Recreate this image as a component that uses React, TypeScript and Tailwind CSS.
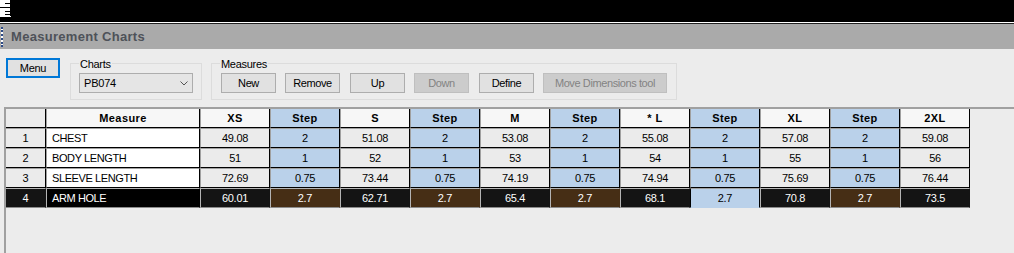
import React from "react";

const cols = ["XS", "Step", "S", "Step", "M", "Step", "* L", "Step", "XL", "Step", "2XL"];

const rows: { n: string; name: string; vals: string[] }[] = [
  { n: "1", name: "CHEST", vals: ["49.08", "2", "51.08", "2", "53.08", "2", "55.08", "2", "57.08", "2", "59.08"] },
  { n: "2", name: "BODY LENGTH", vals: ["51", "1", "52", "1", "53", "1", "54", "1", "55", "1", "56"] },
  { n: "3", name: "SLEEVE LENGTH", vals: ["72.69", "0.75", "73.44", "0.75", "74.19", "0.75", "74.94", "0.75", "75.69", "0.75", "76.44"] },
  { n: "4", name: "ARM HOLE", vals: ["60.01", "2.7", "62.71", "2.7", "65.4", "2.7", "68.1", "2.7", "70.8", "2.7", "73.5"] },
];

function Btn({ label, w, disabled, ml }: { label: string; w: string; disabled?: boolean; ml: string }) {
  return (
    <div
      className={
        (disabled
          ? "bg-[#cccccc] border-[#bfbfbf] text-[#838383] "
          : "bg-[#e1e1e1] border-[#adadad] text-black ") +
        w +
        " " +
        ml +
        " h-[20px] border flex items-center justify-center tracking-[-0.4px]"
      }
    >
      {label}
    </div>
  );
}

function headerCellClass(i: number) {
  const isStep = i % 2 === 1;
  return isStep
    ? "w-[70px] h-[19px] bg-[#bad1ea] border-l border-l-[#a0a0a0] border-r border-r-black border-b border-b-black flex items-center justify-center font-bold tracking-[0.4px]"
    : "w-[70px] h-[19px] bg-[#f7f7f7] border-l border-l-[#a0a0a0] border-r border-r-black border-b border-b-black flex items-center justify-center font-bold tracking-[0.4px]";
}

function valueCellClass(i: number, dark: boolean, selected: boolean) {
  const isStep = i % 2 === 1;
  if (dark) {
    if (selected)
      return "w-[70px] h-[20px] bg-[#bad1ea] text-black border-l border-l-black border-r border-r-black border-t border-t-[#a0a0a0] border-b border-b-[#bad1ea] flex items-center justify-center tracking-[-0.3px]";
    if (isStep)
      return "w-[70px] h-[20px] bg-[#462e15] text-white border-l border-l-[#b4b4b4] border-r border-r-[#462e15] border-t border-t-[#b4b4b4] border-b border-b-[#8c8c8c] flex items-center justify-center tracking-[-0.3px]";
    return "w-[70px] h-[20px] bg-[#141414] text-white border-l border-l-[#b4b4b4] border-r border-r-[#141414] border-t border-t-[#b4b4b4] border-b border-b-[#8c8c8c] flex items-center justify-center tracking-[-0.3px]";
  }
  if (isStep)
    return "w-[70px] h-[20px] bg-[#bad1ea] text-black border-l border-l-[#a0a0a0] border-r border-r-black border-t border-t-[#a0a0a0] border-b border-b-black flex items-center justify-center tracking-[-0.3px]";
  return "w-[70px] h-[20px] bg-[#ebebeb] text-black border-l border-l-[#a0a0a0] border-r border-r-black border-t border-t-[#a0a0a0] border-b border-b-black flex items-center justify-center tracking-[-0.3px]";
}

export default function App() {
  return (
    <div className="w-[1014px] h-[253px] overflow-hidden bg-[#ececec] text-[11px] text-black font-['Liberation_Sans',Arial,sans-serif] flex flex-col">
      {/* top black strip */}
      <div className="h-[22px] bg-black flex items-start shrink-0">
        <svg width="11" height="17" viewBox="0 0 11 17" className="block">
          <rect x="0" y="0" width="11" height="17" fill="#ffffff" />
          <rect x="10" y="0" width="1" height="16" fill="#000" />
          <rect x="5" y="3" width="6" height="1" fill="#000" />
          <rect x="0" y="7" width="11" height="1" fill="#000" />
          <rect x="5" y="11" width="6" height="1" fill="#000" />
          <rect x="5" y="14" width="6" height="1" fill="#000" />
        </svg>
      </div>
      <div className="h-px bg-white shrink-0" />
      <div className="h-px bg-[#222222] shrink-0" />
      {/* title bar */}
      <div className="h-[25px] bg-[#aaaaaa] flex items-center shrink-0">
        <div className="ml-[1px] w-[2px] h-[20px] bg-white border-l-2 border-dotted border-[#2c4a86]" />
        <div className="ml-[8px] text-[13px] font-bold tracking-[0.3px] text-[#4e5259]">Measurement Charts</div>
      </div>
      {/* toolbar */}
      <div className="h-[58px] shrink-0 flex items-start pl-[6px] pt-[9px]">
        <div className="w-[54px] h-[20px] border-2 border-[#0078d7] bg-[#e1e1e1] flex items-center justify-center tracking-[-0.3px]">
          Menu
        </div>
        <div className="relative ml-[10px] mt-[5px] w-[132px] h-[37px] border border-[#dcdcdc] pl-[8px] pt-[9px]">
          <span className="absolute left-[8px] top-[-8px] bg-[#ececec] px-[1px] tracking-[-0.3px]">Charts</span>
          <div className="w-[114px] h-[20px] bg-[#e5e5e5] border border-[#adadad] flex items-center justify-between pl-[4px] pr-[4px]">
            <span className="tracking-[-0.2px]">PB074</span>
            <svg width="8" height="5" viewBox="0 0 8 5" className="block">
              <polyline points="0.5,0.5 4,4 7.5,0.5" fill="none" stroke="#555555" strokeWidth="1" />
            </svg>
          </div>
        </div>
        <div className="relative ml-[9px] mt-[5px] w-[466px] h-[37px] border border-[#dcdcdc] pl-[9px] pt-[9px] flex items-start">
          <span className="absolute left-[8px] top-[-8px] bg-[#ececec] px-[1px] tracking-[-0.3px]">Measures</span>
          <Btn label="New" w="w-[55px]" ml="ml-0" />
          <Btn label="Remove" w="w-[55px]" ml="ml-[9px]" />
          <Btn label="Up" w="w-[55px]" ml="ml-[10px]" />
          <Btn label="Down" w="w-[55px]" ml="ml-[9px]" disabled />
          <Btn label="Define" w="w-[55px]" ml="ml-[10px]" />
          <Btn label="Move Dimensions tool" w="w-[124px]" ml="ml-[9px]" disabled />
        </div>
      </div>
      {/* grid panel */}
      <div className="ml-[4px] flex-1 border-l-2 border-t-2 border-[#a0a0a0]">
        <div className="flex flex-col">
          {/* header */}
          <div className="flex">
            <div className="w-[40px] h-[19px] bg-[#ececec] border-r border-r-black border-b border-b-black" />
            <div className="w-[154px] h-[19px] bg-[#f7f7f7] border-l border-l-[#a0a0a0] border-r border-r-black border-b border-b-black flex items-center justify-center font-bold tracking-[0.4px]">
              Measure
            </div>
            {cols.map((c, i) => (
              <div key={i} className={headerCellClass(i)}>
                {c}
              </div>
            ))}
          </div>
          {rows.map((r, ri) => {
            const dark = ri === 3;
            return (
              <div key={ri} className="flex">
                <div
                  className={
                    dark
                      ? "w-[40px] h-[20px] bg-[#141414] text-white border-r border-r-[#141414] border-t border-t-[#b4b4b4] border-b border-b-[#8c8c8c] flex items-center justify-center"
                      : "w-[40px] h-[20px] bg-[#ebebeb] border-r border-r-black border-t border-t-[#a0a0a0] border-b border-b-black flex items-center justify-center"
                  }
                >
                  {r.n}
                </div>
                <div
                  className={
                    dark
                      ? "w-[154px] h-[20px] bg-black text-white border-l border-l-[#b4b4b4] border-r border-r-black border-t border-t-[#b4b4b4] border-b border-b-[#8c8c8c] flex items-center pl-[5px] tracking-[-0.4px]"
                      : "w-[154px] h-[20px] bg-white border-l border-l-[#a0a0a0] border-r border-r-black border-t border-t-[#a0a0a0] border-b border-b-black flex items-center pl-[5px] tracking-[-0.4px]"
                  }
                >
                  {r.name}
                </div>
                {r.vals.map((v, i) => (
                  <div key={i} className={valueCellClass(i, dark, dark && i === 7)}>
                    {v}
                  </div>
                ))}
              </div>
            );
          })}
        </div>
      </div>
    </div>
  );
}
